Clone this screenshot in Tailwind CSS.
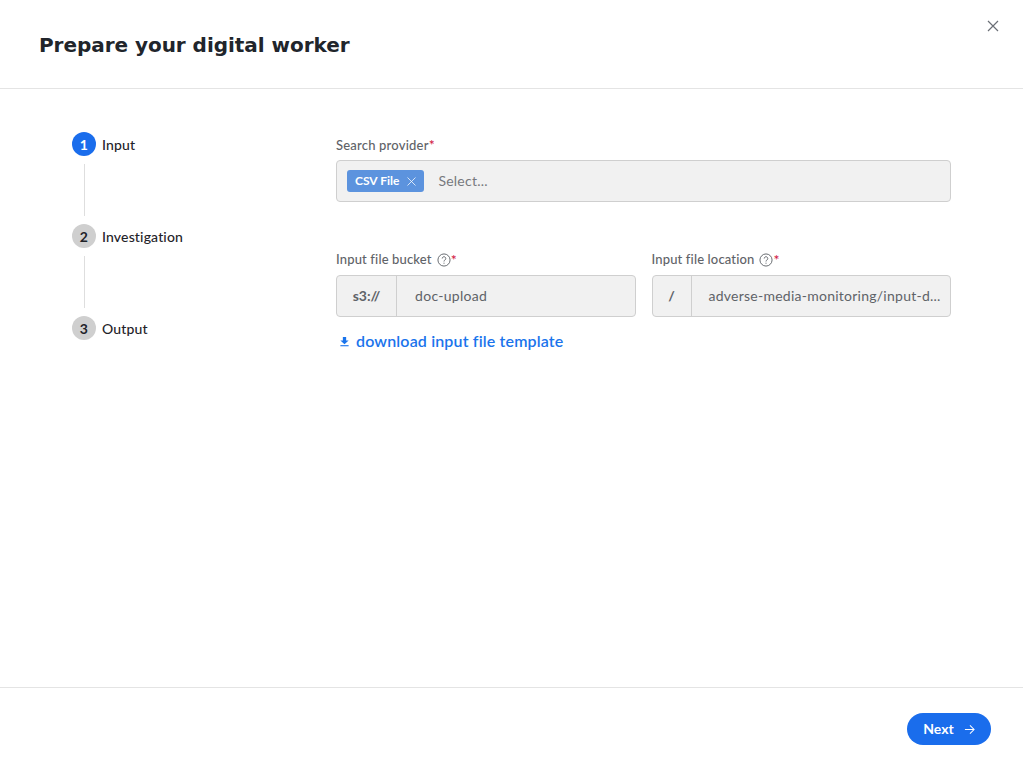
<!DOCTYPE html>
<html lang="en">
<head>
    <meta charset="UTF-8">
    <meta name="viewport" content="width=device-width, initial-scale=1.0">
    <title>Prepare your digital worker</title>
    <script src="https://cdn.jsdelivr.net/npm/@tailwindcss/browser@4"></script>
</head>
<body class="bg-white font-['Lato',sans-serif] text-[#1f2329]">
    <div class="relative flex flex-col h-[765px] w-[1023px] overflow-hidden">
        <!-- Header -->
        <header class="h-[89px] shrink-0 border-b border-[#e4e4e4] pl-[39px] pt-[30px]">
            <h1 class="font-['DejaVu_Sans',sans-serif] text-[20px] leading-[30px] tracking-[-0.04px] font-bold text-[#21252b]">Prepare your digital worker</h1>
        </header>
        <button class="absolute right-[24px] top-[20px] text-[#6b6f76]" aria-label="Close">
            <svg width="12" height="12" viewBox="0 0 12 12" fill="none" stroke="currentColor" stroke-width="1.2"><path d="M1 1l10 10M11 1L1 11"/></svg>
        </button>

        <!-- Body -->
        <main class="flex flex-1 pt-[43px] pl-[72px]">
            <!-- Stepper -->
            <ol class="w-[264px] shrink-0 text-[14px] font-medium tracking-[0.15px]">
                <li class="flex items-center gap-[6px] h-[24px]">
                    <span class="flex items-center justify-center w-[24px] h-[24px] rounded-full bg-[#1a6dec] text-white font-bold">1</span>
                    <span>Input</span>
                </li>
                <li class="ml-[12px] w-px h-[52px] my-[8px] bg-[#dedede]"></li>
                <li class="flex items-center gap-[6px] h-[24px]">
                    <span class="flex items-center justify-center w-[24px] h-[24px] rounded-full bg-[#cfcfcf] font-bold">2</span>
                    <span>Investigation</span>
                </li>
                <li class="ml-[12px] w-px h-[52px] my-[8px] bg-[#dedede]"></li>
                <li class="flex items-center gap-[6px] h-[24px]">
                    <span class="flex items-center justify-center w-[24px] h-[24px] rounded-full bg-[#cfcfcf] font-bold">3</span>
                    <span>Output</span>
                </li>
            </ol>

            <!-- Form -->
            <form class="w-[615px] pt-px text-[14px] text-[#5f6368]">
                <label class="block h-[27px] leading-[24px] text-[13px] font-medium tracking-[0.2px]">Search provider<span class="text-[14px] text-[#d0103a]">*</span></label>
                <div class="flex items-center h-[42px] rounded border border-[#cfcfcf] bg-[#f1f1f1] pl-[10px]">
                    <span class="flex items-center gap-[8px] h-[22px] px-[8px] rounded-[3px] bg-[#5c93de] text-white text-[12px] font-bold">CSV File
                        <svg class="text-white/75" width="9" height="9" viewBox="0 0 9 9" fill="none" stroke="currentColor" stroke-width="1"><path d="M.5.5l8 8M8.5.5l-8 8"/></svg>
                    </span>
                    <span class="ml-[14px] pb-[2px] tracking-[0.25px] text-[#77797d]">Select...</span>
                </div>

                <div class="grid grid-cols-2 gap-x-[16px] mt-[46px]">
                    <div>
                        <label class="flex items-center h-[27px] pb-[4px] text-[13px] font-medium tracking-[0.15px]">Input file bucket
                            <svg class="ml-[5px]" width="14" height="14" viewBox="0 0 15 15" fill="none" stroke="currentColor"><circle cx="7.5" cy="7.5" r="6.500"/><path d="M5.600 5.900a1.900 1.900 0 1 1 2.900 1.600c-.7.4-1 .8-1 1.600"/><path d="M7.500 10.400v1.100"/></svg>
                            <span class="text-[14px] text-[#d0103a]">*</span></label>
                        <div class="flex h-[42px] rounded border border-[#cfcfcf] bg-[#f1f1f1] items-stretch">
                            <span class="flex items-center justify-center w-[60px] pb-[2px] border-r border-[#cfcfcf] font-bold">s3://</span>
                            <span class="flex items-center pl-[18px] pb-[2px] tracking-[0.3px]">doc-upload</span>
                        </div>
                    </div>
                    <div>
                        <label class="flex items-center h-[27px] pb-[4px] text-[13px] font-medium tracking-[0.15px]">Input file location
                            <svg class="ml-[5px]" width="14" height="14" viewBox="0 0 15 15" fill="none" stroke="currentColor"><circle cx="7.5" cy="7.5" r="6.500"/><path d="M5.600 5.900a1.900 1.900 0 1 1 2.900 1.600c-.7.4-1 .8-1 1.600"/><path d="M7.500 10.400v1.100"/></svg>
                            <span class="text-[14px] text-[#d0103a]">*</span></label>
                        <div class="flex h-[42px] rounded border border-[#cfcfcf] bg-[#f1f1f1] items-stretch">
                            <span class="flex items-center justify-center w-[39px] shrink-0 pb-[2px] border-r border-[#cfcfcf] font-bold">/</span>
                            <span class="flex items-center pl-[17px] pb-[2px] min-w-0 whitespace-nowrap tracking-[0.25px]">adverse-media-monitoring/input-d...</span>
                        </div>
                    </div>
                </div>

                <a href="#" class="inline-flex items-center gap-[6px] mt-[12px] ml-[3px] text-[16px] font-semibold tracking-[0.15px] text-[#1a74ec]">
                    <svg width="11" height="11" viewBox="0 0 12 12" fill="currentColor"><path d="M4.200 1h3.600v4h2.700L6 9 1.500 5h2.700z"/><path d="M1.500 10h9v1.200h-9z"/></svg>
                    download input file template
                </a>
            </form>
        </main>

        <!-- Footer -->
        <footer class="flex items-start justify-end h-[78px] shrink-0 border-t border-[#e4e4e4] pt-[25px] pr-[32px]">
            <button class="flex items-center justify-center gap-[10px] w-[84px] h-[32px] pb-[2px] rounded-full bg-[#1a6dec] text-white text-[14px] font-bold">Next
                <svg class="mt-[2px]" width="11" height="11" viewBox="0 0 12 12" fill="none" stroke="currentColor" stroke-width="1.100"><path d="M1 6h10M6.500 1.500L11 6l-4.500 4.500"/></svg>
            </button>
        </footer>
    </div>
</body>
</html>
